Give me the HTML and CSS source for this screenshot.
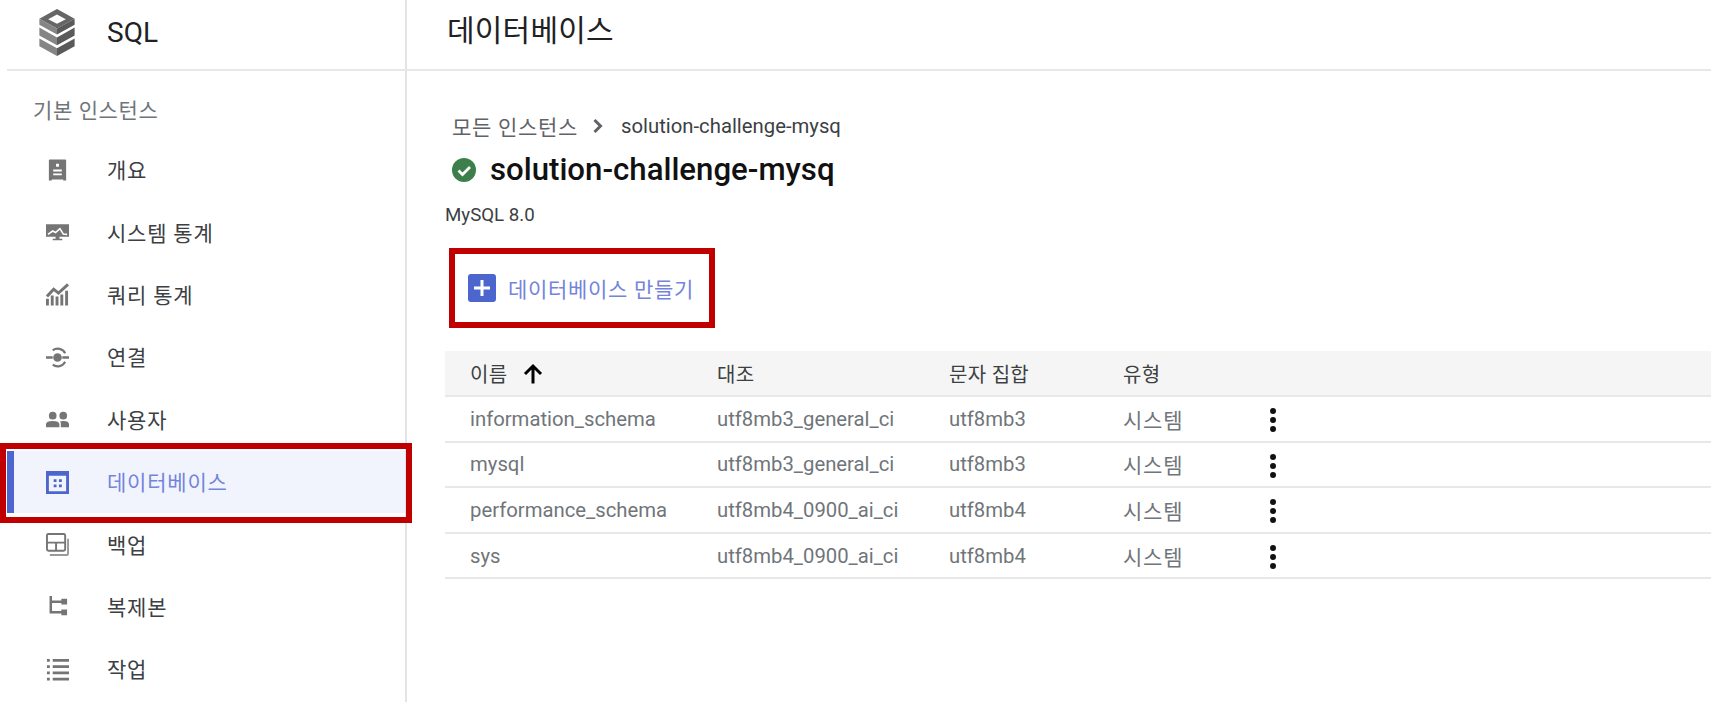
FILE: index.html
```html
<!DOCTYPE html>
<html lang="ko">
<head>
<meta charset="utf-8">
<title>SQL 데이터베이스</title>
<link rel="stylesheet" href="styles.css">
</head>
<body>
<div class="app">
  <aside class="sidebar">
    <div class="brand">
      <svg class="logo" viewBox="0 0 36 48">
        <path fill="#666" d="M18 0 36 10 18 20 0 10Z"/>
        <path fill="#fff" d="M18 5.500 27 10.500 18 15 9 10.500Z"/>
        <path fill="#5a5a5a" d="M18 20 36 10V16L18 26Z"/>
        <path fill="#858585" d="M18 20 0 10V16L18 26Z"/>
        <path fill="#5a5a5a" d="M18 29 36 19V27L18 37Z"/>
        <path fill="#858585" d="M18 29 0 19V27L18 37Z"/>
        <path fill="#5a5a5a" d="M18 40 36 30V38L18 48Z"/>
        <path fill="#858585" d="M18 40 0 30V38L18 48Z"/>
      </svg>
      <span class="brand-name">SQL</span>
    </div>
    <div class="section-label">기본 인스턴스</div>
    <nav class="nav">
      <a class="nav-item">
        <svg class="nav-icon" viewBox="0 0 24 24"><path fill="#757575" d="M3 1.500Q3 .5 4 .5H20Q21 .5 21 1.500V22.500H18V21.500H6V22.500H3Z"/><path fill="#fff" d="M10.500 5H13.500V8H10.500ZM7.500 11H16.500V13H7.500ZM7.500 15H16.500V17H7.500Z"/></svg>
        <span>개요</span>
      </a>
      <a class="nav-item">
        <svg class="nav-icon" viewBox="0 0 24 24"><path fill="#757575" d="M0 3.500H24V16.500H14V18.500H17V20H7V18.500H10V16.500H0Z"/><path fill="none" stroke="#fff" stroke-width="1.700" d="M2 14 7 10.500 10 12 14.500 8 18 13.500 22 14"/></svg>
        <span>시스템 통계</span>
      </a>
      <a class="nav-item">
        <svg class="nav-icon" viewBox="0 0 24 24"><path fill="none" stroke="#757575" stroke-width="3" d="M1 14 8 6.500 13 10.500 23 1.500"/><path fill="#757575" d="M0 16.500H3V23.500H0ZM5 13H8V23.500H5ZM10 14H13V23.500H10ZM15 12H18V23.500H15ZM20 8H23V23.500H20Z"/></svg>
        <span>쿼리 통계</span>
      </a>
      <a class="nav-item">
        <svg class="nav-icon" viewBox="0 0 24 24"><path fill="none" stroke="#757575" stroke-width="2.400" d="M0 12H7M17 12H25"/><circle cx="12" cy="12" r="4.500" fill="#757575"/><path fill="none" stroke="#757575" stroke-width="2.200" d="M7 4.500A8.800 8.800 0 0 1 20 7.500M7 19.500A8.800 8.800 0 0 0 20 16.500"/></svg>
        <span>연결</span>
      </a>
      <a class="nav-item">
        <svg class="nav-icon" viewBox="0 0 24 24"><circle cx="7" cy="8" r="4" fill="#757575"/><circle cx="18" cy="8" r="4" fill="#757575"/><path fill="#757575" d="M0 20V17Q0 13.500 7 13.500T14 17V20ZM15.500 20V16.500Q15.500 15 14.500 14 16 13.500 18 13.500 24 13.500 24 17V20Z"/></svg>
        <span>사용자</span>
      </a>
      <a class="nav-item is-active">
        <svg class="nav-icon" viewBox="0 0 24 24"><path fill="#4c66ce" fill-rule="evenodd" d="M0 0H24V24H0ZM3 5V21H21V5Z"/><path fill="#4c66ce" d="M8 8.500H11V11.500H8ZM13.500 8.500H16.500V11.500H13.500ZM8 14H11V17H8ZM13.500 14H16.500V17H13.500Z"/></svg>
        <span>데이터베이스</span>
      </a>
      <a class="nav-item">
        <svg class="nav-icon" viewBox="0 0 24 24"><path fill="none" stroke="#757575" stroke-width="2" d="M1 2.500Q1 1 2.500 1H18.500Q20 1 20 2.500V17Q20 18.500 18.500 18.500H2.500Q1 18.500 1 17ZM1 10H20M10.500 10V18.500"/><path fill="none" stroke="#9a9a9a" stroke-width="2" d="M23 6V21Q23 23 21 23H4"/></svg>
        <span>백업</span>
      </a>
      <a class="nav-item">
        <svg class="nav-icon" viewBox="0 0 24 24"><path fill="none" stroke="#757575" stroke-width="2.600" d="M5 1V18H18M5 7H18"/><path fill="#757575" d="M16 4H22V10H16ZM16 15H22V21H16Z"/></svg>
        <span>복제본</span>
      </a>
      <a class="nav-item">
        <svg class="nav-icon" viewBox="0 0 24 24"><path fill="#757575" d="M1 1H4V4H1ZM7 1H24V4H7ZM1 7.500H4V10.500H1ZM7 7.500H24V10.500H7ZM1 14H4V17H1ZM7 14H24V17H7ZM1 20.500H4V23.500H1ZM7 20.500H24V23.500H7Z"/></svg>
        <span>작업</span>
      </a>
    </nav>
  </aside>
  <main class="main">
    <header class="page-header"><h1 class="page-title">데이터베이스</h1></header>
    <div class="content">
      <div class="breadcrumb">
        <span class="crumb-link">모든 인스턴스</span>
        <svg class="crumb-sep" viewBox="0 0 12 16"><path fill="none" stroke="#5f6368" stroke-width="3" d="M2.500 2 8.500 8 2.500 14"/></svg>
        <span class="crumb-current">solution-challenge-mysq</span>
      </div>
      <div class="instance">
        <svg class="status" viewBox="0 0 24 24"><circle cx="12" cy="12" r="12" fill="#3c7f4b"/><path fill="none" stroke="#fff" stroke-width="2.800" d="M6.500 12.500 10.500 16.500 18 9"/></svg>
        <h2 class="instance-name">solution-challenge-mysq</h2>
      </div>
      <div class="version">MySQL 8.0</div>
      <div class="toolbar">
        <button class="create">
          <svg class="plus" viewBox="0 0 28 28"><rect width="28" height="28" rx="3" fill="#4c66ce"/><path fill="none" stroke="#fff" stroke-width="3" d="M14 6V22M6 14H22"/></svg>
          <span>데이터베이스 만들기</span>
        </button>
      </div>
      <div class="table">
        <div class="row head">
          <div class="cell">이름<svg class="sort" viewBox="0 0 20 20"><path fill="none" stroke="#000" stroke-width="3" d="M10 20V3M2 10.500 10 2.500 18 10.500"/></svg></div>
          <div class="cell">대조</div>
          <div class="cell">문자 집합</div>
          <div class="cell">유형</div>
          <div class="cell"></div>
        </div>
        <div class="row">
          <div class="cell">information_schema</div><div class="cell">utf8mb3_general_ci</div><div class="cell">utf8mb3</div><div class="cell type">시스템</div>
          <div class="cell"><span class="dots"><i></i><i></i><i></i></span></div>
        </div>
        <div class="row">
          <div class="cell">mysql</div><div class="cell">utf8mb3_general_ci</div><div class="cell">utf8mb3</div><div class="cell type">시스템</div>
          <div class="cell"><span class="dots"><i></i><i></i><i></i></span></div>
        </div>
        <div class="row">
          <div class="cell">performance_schema</div><div class="cell">utf8mb4_0900_ai_ci</div><div class="cell">utf8mb4</div><div class="cell type">시스템</div>
          <div class="cell"><span class="dots"><i></i><i></i><i></i></span></div>
        </div>
        <div class="row">
          <div class="cell">sys</div><div class="cell">utf8mb4_0900_ai_ci</div><div class="cell">utf8mb4</div><div class="cell type">시스템</div>
          <div class="cell"><span class="dots"><i></i><i></i><i></i></span></div>
        </div>
      </div>
    </div>
  </main>
</div>
</body>
</html>
```

FILE: styles.css
```css
* { box-sizing: border-box; }
html, body { margin: 0; height: 100%; }
body {
  background: #fff;
  color: #202124;
  font-family: Roboto, "Noto Sans CJK KR", sans-serif;
  overflow: hidden;
}
h1, h2 { margin: 0; font-weight: 400; }

.app { display: flex; height: 702px; }

.sidebar {
  width: 407px;
  flex: none;
  padding-left: 7px;
  border-right: 2px solid #e4e4e4;
}
.brand {
  height: 71px;
  display: flex;
  align-items: center;
  gap: 32px;
  padding: 0 0 4px 32px;
  border-bottom: 2px solid #e8e8e8;
}
.logo { width: 36px; height: 47px; flex: none; }
.brand-name { font-size: 28px; color: #202124; }
.section-label {
  margin-left: -7px;
  padding: 27px 0 0 33px;
  height: 68px;
  font-size: 21px;
  letter-spacing: .6px;
  line-height: 26px;
  color: #70757a;
}
.nav { margin-left: -7px; }
.nav-item {
  height: 62.400px;
  display: flex;
  align-items: center;
  gap: 38px;
  padding-left: 46px;
  font-size: 21px;
  letter-spacing: .8px;
  color: #3c4043;
  position: relative;
}
.nav-item span { margin-bottom: 2px; }
.nav-icon { width: 23px; height: 23px; flex: none; }
.is-active {
  color: #7484db;
  margin-left: 7px;
  background: #f1f4fd;
  border-left: 7px solid #4c66ce;
  background-clip: padding-box;
  padding-left: 32px;
}
.is-active::after {
  content: "";
  position: absolute;
  left: -14px;
  right: -7px;
  top: -8px;
  bottom: -10px;
  border: 6px solid #c00000;
  pointer-events: none;
}

.main { flex: 1; min-width: 0; }
.page-header {
  height: 71px;
  padding: 11px 0 0 40px;
  border-bottom: 2px solid #e8e8e8;
}
.page-title { font-size: 30px; letter-spacing: .2px; line-height: 40px; color: #202124; }
.content { padding-top: 41px; }

.breadcrumb {
  display: flex;
  align-items: center;
  height: 28px;
  margin-left: 45px;
  font-size: 21px;
  letter-spacing: .7px;
}
.crumb-link { color: #5f6368; }
.crumb-sep { width: 12px; height: 16px; margin: 0 17px 0 14px; flex: none; }
.crumb-current { color: #3c4043; font-size: 20.300px; letter-spacing: 0; }

.instance {
  display: flex;
  align-items: center;
  height: 36px;
  margin: 12px 0 0 45px;
  gap: 14px;
}
.status { width: 24px; height: 24px; flex: none; }
.instance-name { font-size: 31.200px; font-weight: 500; color: #111; line-height: 36px; }

.version {
  margin: 14px 0 0 38px;
  height: 26px;
  font-size: 18.700px;
  line-height: 26px;
  color: #3c4043;
}

.toolbar { margin: 20px 0 0 42px; }
.create {
  width: 266px;
  height: 80px;
  border: 6px solid #c00000;
  background: none;
  padding: 0 0 0 13px;
  display: flex;
  align-items: center;
  gap: 12px;
  font: inherit;
  font-size: 21px;
  letter-spacing: .7px;
  color: #7484db;
}
.plus { width: 28px; height: 28px; flex: none; }

.table { margin: 23px 0 0 38px; }
.row {
  display: grid;
  grid-template-columns: 272px 232px 174px 149px 60px;
  align-items: center;
  height: 45.600px;
  border-bottom: 2px solid #e8e8e8;
  font-size: 20.300px;
  color: #70757a;
}
.cell:first-child { padding-left: 25px; }
.type { font-size: 21px; letter-spacing: .8px; }
.head {
  height: 46px;
  background: #f5f5f5;
  color: #3c4043;
  font-size: 20px;
  letter-spacing: .3px;
}
.head .cell:first-child { display: flex; align-items: center; gap: 16px; }
.sort { width: 20px; height: 21px; flex: none; }
.dots { display: flex; flex-direction: column; gap: 3px; width: 7px; margin: 3px 0 0 -2px; }
.dots i { display: block; width: 6px; height: 6px; border-radius: 50%; background: #111; }
```
